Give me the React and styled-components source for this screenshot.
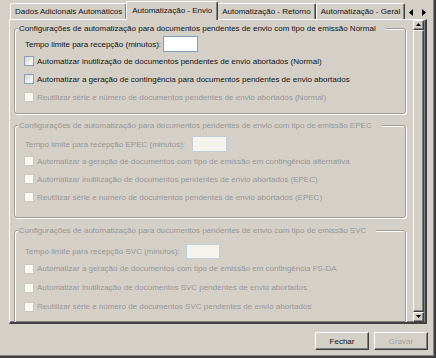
import React from 'react'
import styled, { createGlobalStyle } from 'styled-components'

const Global = createGlobalStyle`
  html, body {
    margin: 0;
    padding: 0;
    background: #d4d0c8;
  }
  * {
    box-sizing: border-box;
  }
`

const Window = styled.div`
  width: 436px;
  height: 358px;
  background: #d4d0c8;
  border-right: 2px solid #404040;
  border-bottom: 2px solid #404040;
  box-shadow: inset -1px -1px 0 #808080;
  display: flex;
  flex-direction: column;
  font-family: 'Liberation Sans', Arial, sans-serif;
  font-size: 8px;
  color: #111;
  overflow: hidden;
`

const TabStrip = styled.div`
  height: 19px;
  display: flex;
  align-items: flex-end;
  padding-left: 10px;
  position: relative;
  z-index: 2;
`

const Tab = styled.div`
  height: ${(p) => (p.$active ? '19px' : '16px')};
  padding: 0 ${(p) => (p.$active ? '5px' : '4px')};
  margin: 0 ${(p) => (p.$active ? '-1px' : '0')};
  margin-bottom: ${(p) => (p.$active ? '-1px' : '0')};
  display: flex;
  align-items: center;
  justify-content: center;
  padding-bottom: ${(p) => (p.$active ? '2px' : '0')};
  background: #d4d0c8;
  border-top: 1px solid #fff;
  border-left: 1px solid #fff;
  border-right: 1px solid #404040;
  box-shadow: inset -1px 0 0 #808080;
  border-radius: 2px 2px 0 0;
  white-space: nowrap;
  position: relative;
  z-index: ${(p) => (p.$active ? 2 : 1)};
`

const TabArrows = styled.div`
  display: flex;
  align-items: center;
  gap: 7px;
  height: 16px;
  margin-left: 4px;
  padding-top: 2px;
`

const Panel = styled.div`
  margin: 0 7px 0 9px;
  height: 305px;
  border-top: 1px solid #fff;
  border-left: 1px solid #fff;
  border-right: 2px solid #404040;
  border-bottom: 2px solid #404040;
  box-shadow: inset -1px -1px 0 #808080;
  display: flex;
  position: relative;
  z-index: 1;
`

const Content = styled.div`
  flex: 1;
  overflow: hidden;
  padding: 8px 7px 0 4px;
  display: flex;
  flex-direction: column;
`

const Group = styled.div`
  position: relative;
  flex-shrink: 0;
  margin-top: ${(p) => p.$top}px;
  padding: ${(p) => p.$pt}px 0 ${(p) => p.$pb}px 9px;
  border: 1px solid #9e9e9a;
  border-radius: 3px;
  box-shadow: inset 1px 1px 0 #fff, 1px 1px 0 #fff;
`

const Legend = styled.div`
  position: absolute;
  top: -6px;
  left: 3px;
  line-height: 11px;
  padding: 0 10px 0 1px;
  background: #d4d0c8;
  white-space: nowrap;
  color: ${(p) => (p.$disabled ? '#979797' : '#111')};
`

const TimeRow = styled.div`
  display: flex;
  align-items: center;
  height: 16px;
  padding-left: 1px;
  color: ${(p) => (p.$disabled ? '#979797' : '#111')};
`

const TimeLabel = styled.span`
  width: ${(p) => p.$w}px;
  white-space: nowrap;
`

const NumberInput = styled.div`
  width: ${(p) => p.$w}px;
  height: ${(p) => p.$h}px;
  background: ${(p) => (p.$disabled ? '#f4f3ee' : '#fff')};
  border: 1px solid ${(p) => (p.$disabled ? '#c3cdd8' : '#7f9db9')};
`

const CheckRow = styled.div`
  display: flex;
  align-items: center;
  height: ${(p) => p.$h}px;
  white-space: nowrap;
  color: ${(p) => (p.$disabled ? '#979797' : '#111')};
  &:first-of-type {
    margin-top: ${(p) => p.$first}px;
  }
`

const Box = styled.span`
  width: 10px;
  height: 10px;
  margin-right: 3px;
  flex-shrink: 0;
  border: 1px solid ${(p) => (p.$disabled ? '#cac8bd' : '#8da2ba')};
  background: ${(p) =>
    p.$disabled
      ? '#f7f7f4'
      : 'linear-gradient(135deg, #d6d6d0 0%, #eeeeea 60%, #fbfbf9 100%)'};
`

const ScrollBar = styled.div`
  width: 11px;
  margin-right: 1px;
  display: flex;
  flex-direction: column;
  background: #ecebe6;
`

const ScrollButton = styled.div`
  height: 10px;
  display: flex;
  align-items: center;
  justify-content: center;
  background: #d4d0c8;
  border-top: 1px solid #fff;
  border-left: 1px solid #fff;
  border-right: 1px solid #404040;
  border-bottom: 1px solid #404040;
  box-shadow: inset -1px -1px 0 #808080;
`

const Thumb = styled.div`
  flex: 1;
  background: #d4d0c8;
  border-top: 1px solid #fff;
  border-left: 1px solid #fff;
  border-right: 1px solid #404040;
  border-bottom: 1px solid #404040;
  box-shadow: inset -1px -1px 0 #808080;
`

const Footer = styled.div`
  display: flex;
  justify-content: flex-end;
  gap: 5px;
  padding: 8px 6px 0 0;
`

const Button = styled.div`
  width: 54px;
  height: 18px;
  display: flex;
  align-items: center;
  justify-content: center;
  background: #d4d0c8;
  border-top: 1px solid #fff;
  border-left: 1px solid #fff;
  border-right: 1px solid #404040;
  border-bottom: 1px solid #404040;
  box-shadow: inset -1px -1px 0 #808080;
  color: ${(p) => (p.$disabled ? '#a0a0a0' : '#111')};
`

const Arrow = ({ dir }) => (
  <svg width="5" height="7" viewBox="0 0 5 7">
    {dir === 'left' && <path d="M4 0 L0 3.5 L4 7 Z" fill="#000" />}
    {dir === 'right' && <path d="M1 0 L5 3.5 L1 7 Z" fill="#000" />}
    {dir === 'up' && <path d="M0 4 L2.5 1 L5 4 Z" fill="#000" />}
    {dir === 'down' && <path d="M0 1 L2.5 4 L5 1 Z" fill="#000" />}
  </svg>
)

const groups = [
  {
    title: 'Configurações de automatização para documentos pendentes de envio com tipo de emissão Normal',
    disabled: false,
    top: 0,
    pt: 7,
    pb: 7,
    time: 'Tempo limite para recepção (minutos):',
    labelW: 138,
    input: { w: 35, h: 16 },
    rowH: 18,
    first: 2,
    items: [
      { text: 'Automatizar inutilização de documentos pendentes de envio abortados (Normal)' },
      { text: 'Automatizar a geração de contingência para documentos pendentes de envio abortados' },
      { text: 'Reutilizar série e número de documentos pendentes de envio abortados (Normal)', disabled: true },
    ],
  },
  {
    title: 'Configurações de automatização para documentos pendentes de envio com tipo de emissão EPEC',
    disabled: true,
    top: 11,
    pt: 10,
    pb: 11,
    time: 'Tempo limite para recepção EPEC (minutos):',
    labelW: 167,
    input: { w: 35, h: 16 },
    rowH: 18,
    first: 1,
    items: [
      { text: 'Automatizar a geração de documentos com tipo de emissão em contingência alternativa' },
      { text: 'Automatizar inutilização de documentos pendentes de envio abortados (EPEC)' },
      { text: 'Reutilizar série e número de documentos pendentes de envio abortados (EPEC)' },
    ],
  },
  {
    title: 'Configurações de automatização para documentos pendentes de envio com tipo de emissão SVC',
    disabled: true,
    top: 12,
    pt: 12,
    pb: 11,
    time: 'Tempo limite para recepção SVC (minutos):',
    labelW: 161,
    input: { w: 34, h: 15 },
    rowH: 19,
    first: 1,
    items: [
      { text: 'Automatizar a geração de documentos com tipo de emissão em contingência FS-DA' },
      { text: 'Automatizar inutilização de documentos SVC pendentes de envio abortados' },
      { text: 'Reutilizar série e número de documentos SVC pendentes de envio abortados' },
    ],
  },
]

const tabs = ['Dados Adicionais Automáticos', 'Automatização - Envio', 'Automatização - Retorno', 'Automatização - Geral']

export default function App() {
  return (
    <>
      <Global />
      <Window>
        <TabStrip>
          {tabs.map((t, i) => (
            <Tab key={t} $active={i === 1}>{t}</Tab>
          ))}
          <TabArrows>
            <Arrow dir="left" />
            <Arrow dir="right" />
          </TabArrows>
        </TabStrip>
        <Panel>
          <Content>
            {groups.map((g) => (
              <Group key={g.title} $top={g.top} $pt={g.pt} $pb={g.pb}>
                <Legend $disabled={g.disabled}>{g.title}</Legend>
                <TimeRow $disabled={g.disabled}>
                  <TimeLabel $w={g.labelW}>{g.time}</TimeLabel>
                  <NumberInput $w={g.input.w} $h={g.input.h} $disabled={g.disabled} />
                </TimeRow>
                {g.items.map((it) => {
                  const off = g.disabled || it.disabled
                  return (
                    <CheckRow key={it.text} $h={g.rowH} $first={g.first} $disabled={off}>
                      <Box $disabled={off} />
                      {it.text}
                    </CheckRow>
                  )
                })}
              </Group>
            ))}
          </Content>
          <ScrollBar>
            <ScrollButton><Arrow dir="up" /></ScrollButton>
            <Thumb />
            <ScrollButton><Arrow dir="down" /></ScrollButton>
          </ScrollBar>
        </Panel>
        <Footer>
          <Button>Fechar</Button>
          <Button $disabled>Gravar</Button>
        </Footer>
      </Window>
    </>
  )
}
